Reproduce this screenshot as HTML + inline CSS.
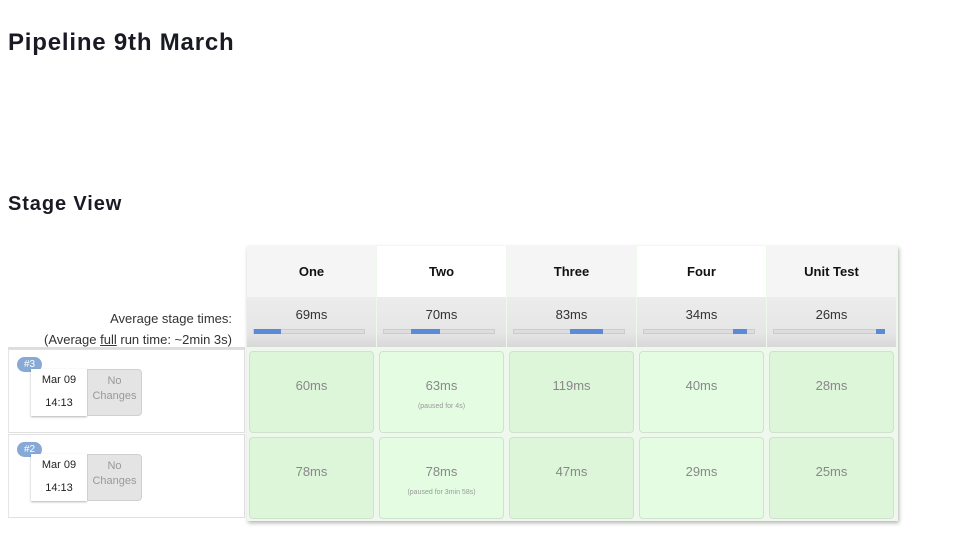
<!DOCTYPE html>
<html><head><meta charset="utf-8"><style>
*{margin:0;padding:0;box-sizing:border-box}
body{width:977px;height:540px;background:#fff;font-family:"Liberation Sans",sans-serif;color:#333;position:relative;overflow:hidden}
.a{position:absolute}
h1{position:absolute;left:8px;top:29px;font-size:24px;font-weight:bold;color:#1a1a24;letter-spacing:0.8px}
h2{position:absolute;left:8px;top:193px;font-size:20px;font-weight:bold;color:#1a1a24;letter-spacing:0.9px}
.tbl{left:247px;top:246px;width:651px;height:275px;box-shadow:1px 2px 4px rgba(0,0,0,.3);background:#eef8ec}
.col{position:absolute;top:0;width:130px;height:275px}
.hd{position:absolute;top:0;left:0;width:129px;height:51px;font-size:13px;font-weight:bold;text-align:center;line-height:51px;color:#111}
.avg{position:absolute;top:51px;left:0;width:129px;height:50px;background:linear-gradient(#ececec,#e6e6e6 70%,#d8d8d8);text-align:center;font-size:13px;padding-top:10px;color:#333}
.bar{position:absolute;left:6px;top:32px;width:112px;height:5px;background:#ddd;border:1px solid #ccc}
.bar i{position:absolute;top:-1px;height:5px;background:#5b8ad6}
.cell{position:absolute;left:2px;width:125px;border:1px solid #cfe3cc;border-radius:4px;text-align:center;color:#888;font-size:13px}
.cell small{display:block;font-size:7px;color:#999;margin-top:10px}
.run{left:8px;width:237px;height:84px;border:1px solid #e0e0e0;border-left:1px solid #e6e6e6}
.badge{position:absolute;left:8px;top:7px;width:25px;height:15px;border-radius:8px;background:#86a9d6;color:#fff;font-size:10px;text-align:center;line-height:15px}
.date{position:absolute;left:22px;top:19px;width:56px;height:47px;background:#fff;box-shadow:0 1px 2px rgba(0,0,0,.3);font-size:11px;text-align:center;line-height:23px;color:#222}
.nc{position:absolute;left:78px;top:19px;width:55px;height:47px;background:#e4e4e4;border:1px solid #d0d0d0;border-radius:0 4px 4px 0;font-size:11px;text-align:center;color:#999;padding-top:4px;line-height:15px}
</style></head><body>
<h1>Pipeline 9th March</h1>
<h2>Stage View</h2>
<div class="a" style="right:745px;top:308px;font-size:13px;text-align:right;line-height:21px;color:#333">Average stage times:<br>(Average <u>full</u> run time: ~2min 3s)</div>
<div class="a" style="left:8px;top:347px;width:237px;height:2px;background:#ddd"></div>
<div class="a run" style="top:349px"><div class="badge">#3</div><div class="date">Mar 09<br>14:13</div><div class="nc">No<br>Changes</div></div>
<div class="a run" style="top:434px"><div class="badge">#2</div><div class="date">Mar 09<br>14:13</div><div class="nc">No<br>Changes</div></div>
<div class="a tbl">
 <div class="col" style="left:0"><div class="hd" style="background:#f5f5f5">One</div><div class="avg">69ms<div class="bar"><i style="left:0;width:27px"></i></div></div>
  <div class="cell" style="top:105px;height:82px;background:#ddf6da;padding-top:26px">60ms</div>
  <div class="cell" style="top:191px;height:82px;background:#ddf6da;padding-top:26px">78ms</div></div>
 <div class="col" style="left:130px"><div class="hd" style="background:#fff">Two</div><div class="avg">70ms<div class="bar"><i style="left:27px;width:29px"></i></div></div>
  <div class="cell" style="top:105px;height:82px;background:#e4fde2;padding-top:26px">63ms<small>(paused for 4s)</small></div>
  <div class="cell" style="top:191px;height:82px;background:#e4fde2;padding-top:26px">78ms<small>(paused for 3min 58s)</small></div></div>
 <div class="col" style="left:260px"><div class="hd" style="background:#f5f5f5">Three</div><div class="avg">83ms<div class="bar"><i style="left:56px;width:33px"></i></div></div>
  <div class="cell" style="top:105px;height:82px;background:#ddf6da;padding-top:26px">119ms</div>
  <div class="cell" style="top:191px;height:82px;background:#ddf6da;padding-top:26px">47ms</div></div>
 <div class="col" style="left:390px"><div class="hd" style="background:#fff">Four</div><div class="avg">34ms<div class="bar"><i style="left:89px;width:14px"></i></div></div>
  <div class="cell" style="top:105px;height:82px;background:#e4fde2;padding-top:26px">40ms</div>
  <div class="cell" style="top:191px;height:82px;background:#e4fde2;padding-top:26px">29ms</div></div>
 <div class="col" style="left:520px"><div class="hd" style="background:#f5f5f5">Unit Test</div><div class="avg">26ms<div class="bar"><i style="left:102px;width:9px"></i></div></div>
  <div class="cell" style="top:105px;height:82px;background:#ddf6da;padding-top:26px">28ms</div>
  <div class="cell" style="top:191px;height:82px;background:#ddf6da;padding-top:26px">25ms</div></div>
</div>
</body></html>
